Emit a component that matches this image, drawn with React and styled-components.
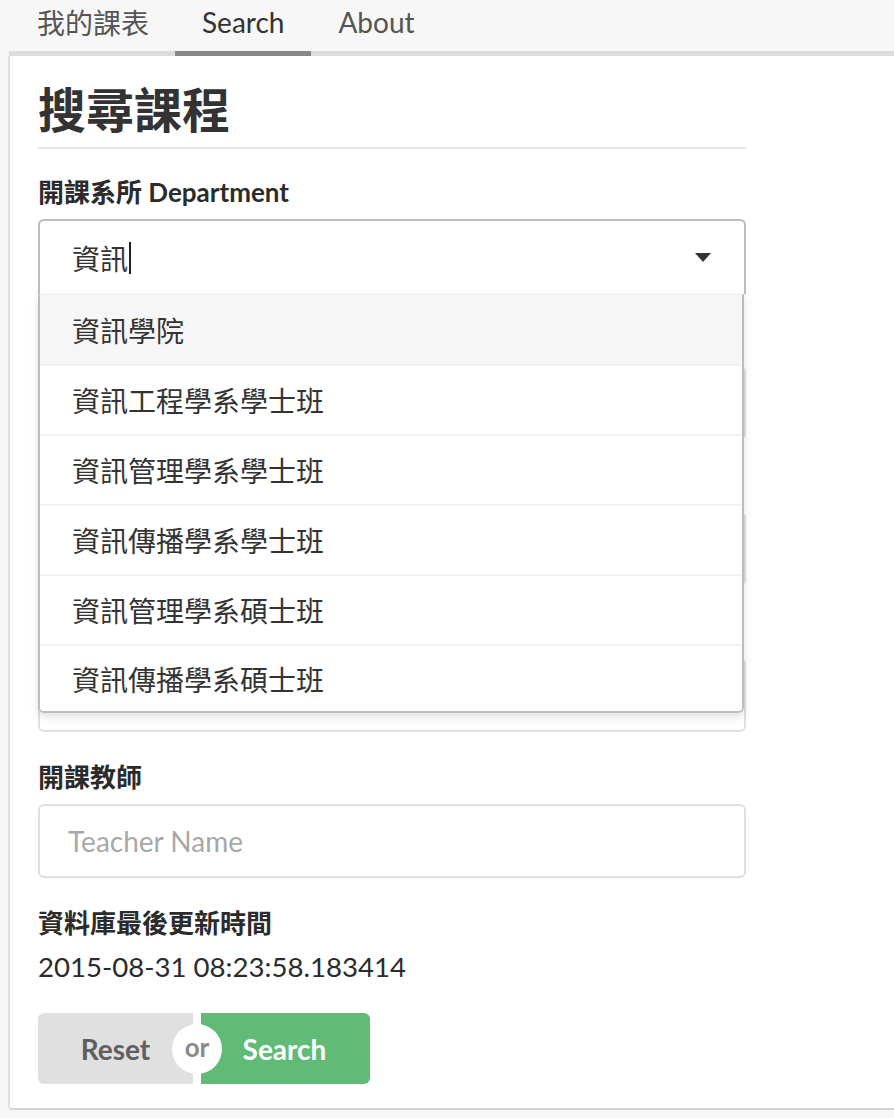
import styled, { createGlobalStyle } from 'styled-components'

const Global = createGlobalStyle`
  html, body {
    margin: 0;
    padding: 0;
    background: #f7f7f7;
    font-family: Lato, "Noto Sans CJK TC", sans-serif;
    color: #333;
  }
`

const options = [
  '資訊學院',
  '資訊工程學系學士班',
  '資訊管理學系學士班',
  '資訊傳播學系學士班',
  '資訊管理學系碩士班',
  '資訊傳播學系碩士班',
]

const App = () => {
  return (
    <>
      <Global />
      <Page>
        <TabBar>
          <Tab>我的課表</Tab>
          <Tab active>Search</Tab>
          <Tab>About</Tab>
        </TabBar>
        <Segment>
          <Content>
            <Heading>搜尋課程</Heading>

            <Field>
              <Label>開課系所 Department</Label>
              <DropdownWrap>
                <Dropdown>
                  <Typed>資訊<Caret /></Typed>
                  <svg width="18" height="11" viewBox="0 0 18 11">
                    <polygon points="1,1 17,1 9,10" fill="#333" />
                  </svg>
                </Dropdown>
                <Menu>
                  {options.map((o, i) => (
                    <MenuItem key={o} selected={i === 0}>{o}</MenuItem>
                  ))}
                </Menu>
              </DropdownWrap>
            </Field>

            {/* fields hidden under the open menu */}
            <Field>
              <Label />
              <Input aria-label="course" />
            </Field>
            <Field>
              <Label />
              <Input aria-label="code" />
            </Field>
            <Field>
              <Label />
              <Input aria-label="time" />
            </Field>

            <Field>
              <Label>開課教師</Label>
              <Input placeholder="Teacher Name" />
            </Field>

            <Field>
              <Label>資料庫最後更新時間</Label>
              <Updated>2015-08-31 08:23:58.183414</Updated>
            </Field>

            <Buttons>
              <Btn>Reset</Btn>
              <Or />
              <Btn primary>Search</Btn>
            </Buttons>
          </Content>
        </Segment>
      </Page>
    </>
  )
}

export default App

const Page = styled.div`
  width: 894px;
  height: 1118px;
  overflow: hidden;
  background: #f7f7f7;
`

const TabBar = styled.div`
  display: flex;
  align-items: flex-start;
  height: 51px;
  margin-left: 9px;
  border-bottom: 5px solid #dddddd;
`

const Tab = styled.div`
  height: 44px;
  padding: 0 27px 7px 27px;
  margin-bottom: -5px;
  display: flex;
  align-items: center;
  font-size: 28px;
  color: ${p => (p.active ? '#333' : '#555')};
  border-bottom: 5px solid ${p => (p.active ? '#888' : 'transparent')};
  &:first-child { padding-left: 28px; padding-right: 26px; }
`

const Segment = styled.div`
  margin-left: 8px;
  background: #fff;
  border-left: 2px solid #e0e0e0;
  border-bottom: 2px solid #d4d4d4;
  border-bottom-left-radius: 4px;
  height: 1054px;
  box-sizing: border-box;
  padding: 26px 0 0 28px;
`

const Content = styled.div`
  width: 708px;
  display: flex;
  flex-direction: column;
`

const Heading = styled.h1`
  margin: 0;
  font-size: 48px;
  font-weight: 700;
  line-height: 56px;
  padding-bottom: 9px;
  border-bottom: 2px solid #e6e6e6;
  color: #333;
`

const Field = styled.div`
  display: flex;
  flex-direction: column;
  margin-top: 29px;
  &:nth-of-type(1) { margin-top: 27px; }
`

const Label = styled.div`
  font-size: 26px;
  font-weight: 700;
  line-height: 32px;
  min-height: 32px;
  margin-bottom: 11px;
  color: #2b2b2b;
`

const DropdownWrap = styled.div`
  position: relative;
`

const Dropdown = styled.div`
  height: 75px;
  box-sizing: border-box;
  border: 2px solid #bdbdbd;
  border-bottom: none;
  border-radius: 6px 6px 0 0;
  display: flex;
  align-items: center;
  justify-content: space-between;
  padding: 0 32px 0 32px;
  background: #fff;
  box-shadow: 0 2px 4px rgba(0, 0, 0, 0.06);
`

const Typed = styled.div`
  font-size: 28px;
  display: flex;
  align-items: center;
  color: #333;
`

const Caret = styled.span`
  display: inline-block;
  width: 2px;
  height: 32px;
  background: #222;
  margin-left: 1px;
`

const Menu = styled.div`
  position: absolute;
  left: 0;
  top: 75px;
  width: 706px;
  box-sizing: border-box;
  background: #fff;
  border: 2px solid #bdbdbd;
  border-top: 1px solid #efefef;
  border-radius: 0 0 6px 6px;
  box-shadow: 0 4px 10px rgba(0, 0, 0, 0.12);
  z-index: 2;
  overflow: hidden;
`

const MenuItem = styled.div`
  height: 70px;
  box-sizing: border-box;
  display: flex;
  align-items: center;
  padding-left: 32px;
  font-size: 28px;
  color: #333;
  background: ${p => (p.selected ? '#f6f6f6' : '#fff')};
  border-top: 2px solid #f2f2f2;
  &:first-child { border-top: none; height: 69px; }
  &:last-child { height: 67px; }
`

const Input = styled.input`
  height: 74px;
  box-sizing: border-box;
  border: 2px solid #e0e0e0;
  border-radius: 6px;
  padding: 0 28px;
  font-family: Lato, "Noto Sans CJK TC", sans-serif;
  font-size: 28px;
  color: #333;
  outline: none;
  &::placeholder { color: #a8a8a8; }
`

const Updated = styled.div`
  font-size: 27.6px;
  line-height: 34px;
  color: #2b2b2b;
`

const Buttons = styled.div`
  display: flex;
  align-items: center;
  margin-top: 29px;
`

const Btn = styled.div`
  height: 71px;
  display: flex;
  align-items: center;
  justify-content: center;
  font-size: 28px;
  font-weight: 700;
  color: ${p => (p.primary ? '#fff' : '#5f5f5f')};
  background: ${p => (p.primary ? '#5fbb76' : '#e0e0e0')};
  width: ${p => (p.primary ? '169px' : '155px')};
  border-radius: ${p => (p.primary ? '0 6px 6px 0' : '6px 0 0 6px')};
  box-sizing: border-box;
  padding-right: ${p => (p.primary ? '2px' : '0')};
`

const Or = styled.div`
  width: 8px;
  height: 71px;
  position: relative;
  z-index: 1;
  &::before {
    content: 'or';
    position: absolute;
    left: 50%;
    top: 50%;
    width: 50px;
    height: 50px;
    margin: -25px 0 0 -25px;
    border-radius: 50%;
    background: #fff;
    color: #8a8a8a;
    font-size: 26px;
    font-weight: 700;
    display: flex;
    align-items: center;
    justify-content: center;
    line-height: 1;
    padding-bottom: 3px;
    box-sizing: border-box;
  }
`
